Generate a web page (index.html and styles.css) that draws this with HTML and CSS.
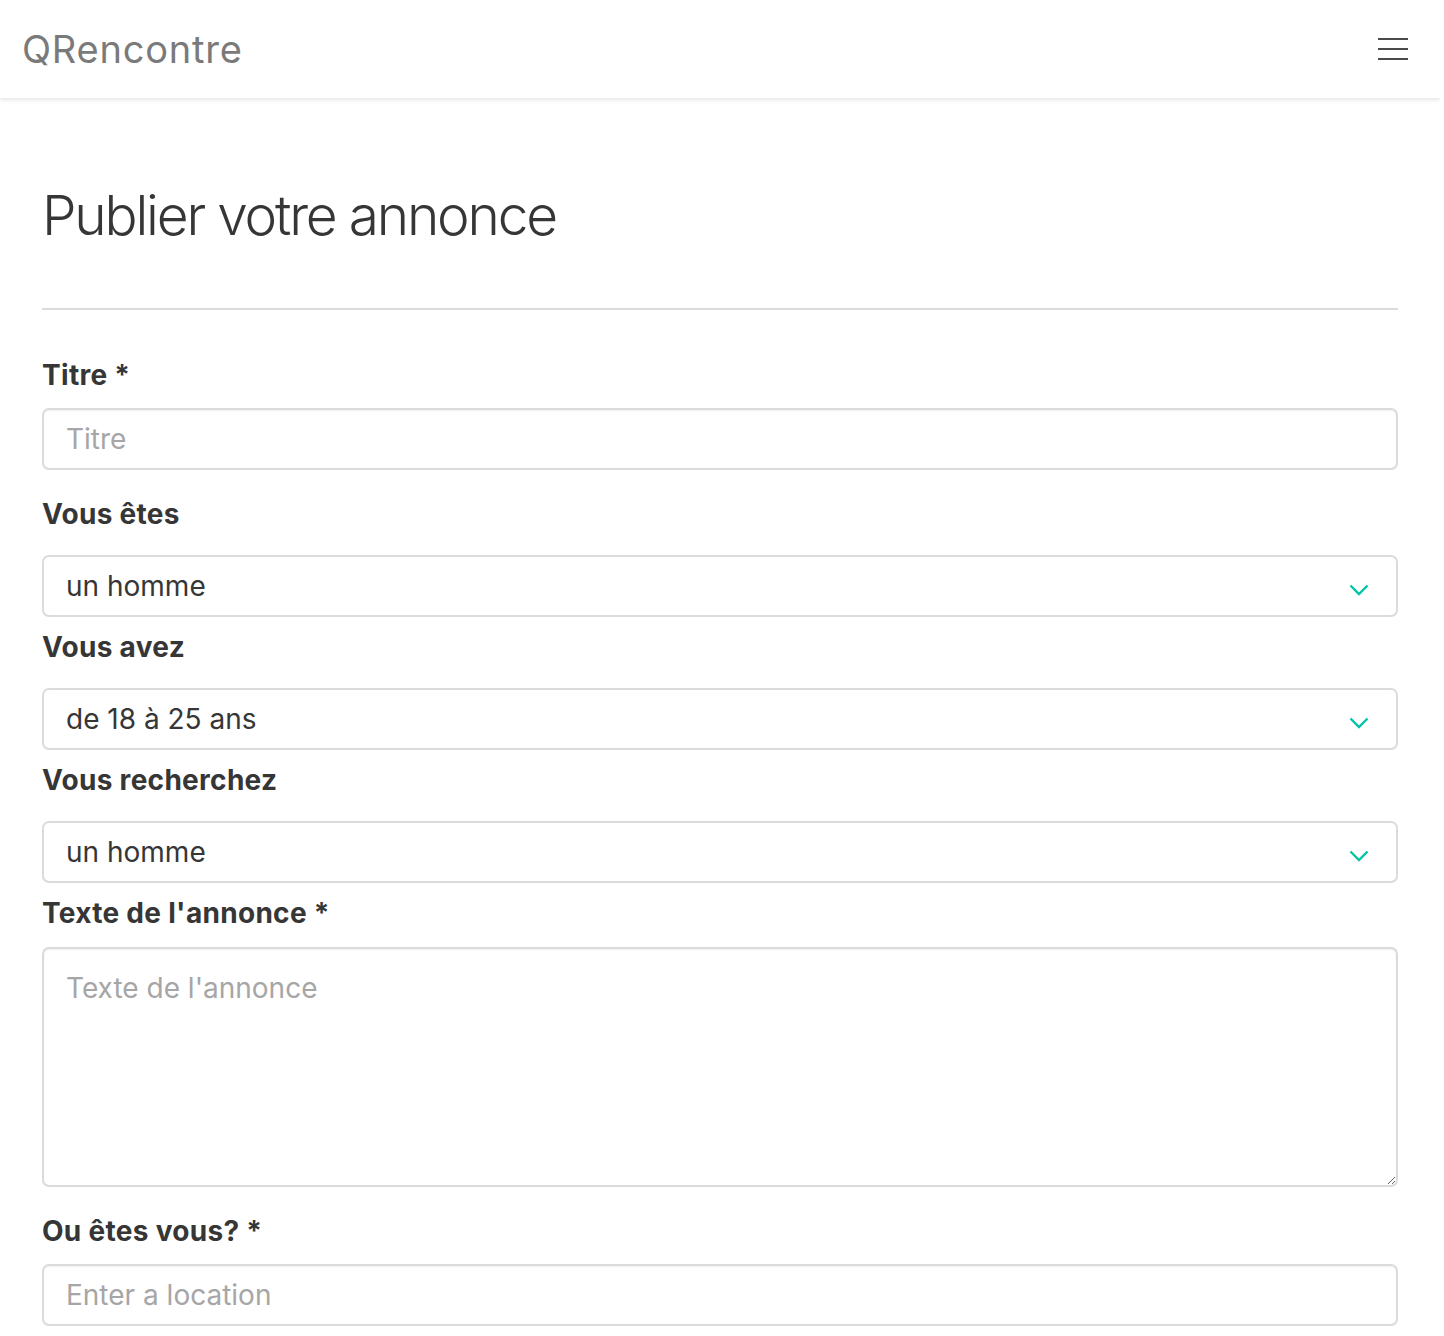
FILE: index.html
```html
<!DOCTYPE html>
<html lang="fr">
<head>
<meta charset="utf-8">
<title>QRencontre</title>
<link rel="stylesheet" href="styles.css">
</head>
<body>
<nav class="navbar">
  <a class="brand" href="#">QRencontre</a>
  <button class="burger" aria-label="menu">
    <span></span><span></span><span></span>
  </button>
</nav>
<main class="section">
  <h1 class="title">Publier votre annonce</h1>
  <hr class="divider">
  <form class="form">
    <div class="field field-input">
      <label class="label" for="titre">Titre *</label>
      <input class="input" id="titre" type="text" placeholder="Titre">
    </div>
    <div class="field field-select">
      <label class="label" for="sexe">Vous êtes</label>
      <div class="select">
        <select id="sexe"><option>un homme</option><option>une femme</option></select>
        <svg class="chevron" viewBox="0 0 20 12" width="20" height="12"><polyline points="1.5,1.5 10,10 18.5,1.5" fill="none" stroke="#00c4a7" stroke-width="2.4"/></svg>
      </div>
    </div>
    <div class="field field-select">
      <label class="label" for="age">Vous avez</label>
      <div class="select">
        <select id="age"><option>de 18 à 25 ans</option></select>
        <svg class="chevron" viewBox="0 0 20 12" width="20" height="12"><polyline points="1.5,1.5 10,10 18.5,1.5" fill="none" stroke="#00c4a7" stroke-width="2.4"/></svg>
      </div>
    </div>
    <div class="field field-select">
      <label class="label" for="recherche">Vous recherchez</label>
      <div class="select">
        <select id="recherche"><option>un homme</option><option>une femme</option></select>
        <svg class="chevron" viewBox="0 0 20 12" width="20" height="12"><polyline points="1.5,1.5 10,10 18.5,1.5" fill="none" stroke="#00c4a7" stroke-width="2.4"/></svg>
      </div>
    </div>
    <div class="field field-input field-textarea">
      <label class="label" for="texte">Texte de l'annonce *</label>
      <textarea class="textarea" id="texte" placeholder="Texte de l'annonce"></textarea>
    </div>
    <div class="field field-input">
      <label class="label" for="lieu">Ou êtes vous? *</label>
      <input class="input" id="lieu" type="text" placeholder="Enter a location">
    </div>
  </form>
</main>
</body>
</html>
```
FILE: styles.css
```css
html, body {
  margin: 0;
  padding: 0;
  background: #fff;
}
body {
  width: 1440px;
  font-family: Inter, Roboto, "Liberation Sans", sans-serif;
  color: #363636;
}
.navbar {
  height: 98px;
  display: flex;
  align-items: center;
  justify-content: space-between;
  padding: 0 32px 0 22px;
  box-sizing: border-box;
  background: #fff;
  box-shadow: 0 2px 4px rgba(10, 10, 10, 0.1);
}
.brand {
  font-size: 38px;
  color: #7a7a7a;
  text-decoration: none;
  letter-spacing: 0.8px;
}
.burger {
  width: 30px;
  height: 22px;
  border: 0;
  padding: 0;
  background: none;
  display: flex;
  flex-direction: column;
  justify-content: space-between;
}
.burger span {
  display: block;
  width: 30px;
  height: 2px;
  background: #4a4a4a;
}
.section {
  padding: 84px 42px 0 42px;
}
.title {
  margin: 0;
  font-size: 55px;
  font-weight: 300;
  line-height: 1.2;
  color: #363636;
  letter-spacing: -2.2px;
}
.divider {
  border: 0;
  height: 2px;
  background: #dbdbdb;
  margin: 60px 0 0 0;
}
.form {
  padding-top: 44px;
}
.field {
  display: flex;
  flex-direction: column;
}
.label {
  font-size: 28px;
  font-weight: 700;
  line-height: 42px;
  color: #363636;
  letter-spacing: 0.3px;
}
.field-input {
  margin-bottom: 23px;
}
.field-input .label {
  margin-bottom: 12px;
}
.field-textarea .label {
  margin-bottom: 13px;
}
.field-select {
  margin-bottom: 9px;
}
.field-select .label {
  margin-bottom: 20px;
}
.input, .textarea, .select select {
  box-sizing: border-box;
  width: 100%;
  border: 2px solid #dbdbdb;
  border-radius: 7px;
  background: #fff;
  font-family: inherit;
  font-size: 28px;
  color: #363636;
  box-shadow: inset 0 1px 2px rgba(10, 10, 10, 0.06);
  outline: none;
}
.input {
  height: 62px;
  padding: 0 22px;
}
.input::placeholder, .textarea::placeholder {
  color: #a6a6a6;
}
.textarea {
  height: 240px;
  padding: 20px 22px;
  resize: vertical;
  line-height: 1.4;
}
.select {
  position: relative;
}
.select select {
  appearance: none;
  -webkit-appearance: none;
  height: 62px;
  padding: 0 22px;
  box-shadow: none;
}
.chevron {
  position: absolute;
  right: 29px;
  top: 29px;
  pointer-events: none;
}
```
